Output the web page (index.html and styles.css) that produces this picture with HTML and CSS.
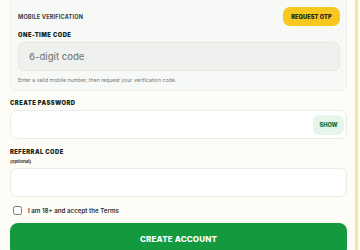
FILE: index.html
```html
<!DOCTYPE html>
<html lang="en">
<head>
    <meta charset="UTF-8">
    <meta name="viewport" content="width=device-width, initial-scale=1.0">
    <title>Create Account</title>
    <link rel="stylesheet" href="styles.css">
</head>
<body>
    <div class="panel">
        <div class="verify-box">
            <div class="verify-head">
                <span class="verify-title">Mobile verification</span>
                <button class="otp-btn">Request OTP</button>
            </div>
            <label class="field-label" for="otp">One-time code</label>
            <input type="text" id="otp" class="otp-input" placeholder="6-digit code">
            <p class="hint">Enter a valid mobile number, then request your verification code.</p>
        </div>

        <div class="field">
            <label class="field-label" for="password">Create password</label>
            <div class="input-wrap">
                <input type="password" id="password" class="text-input">
                <button class="show-btn">Show</button>
            </div>
        </div>

        <div class="field">
            <label class="field-label" for="referral">Referral code</label>
            <span class="optional">(optional)</span>
            <div class="input-wrap">
                <input type="text" id="referral" class="text-input">
            </div>
        </div>

        <label class="terms"><input type="checkbox"> <span>I am 18+ and accept the Terms</span></label>

        <button class="create-btn">Create account</button>
    </div>
</body>
</html>
```

FILE: styles.css
```css
body {
    margin: 0;
    background: #fdfdf9;
    font-family: Inter, "Liberation Sans", sans-serif;
    color: #2b2b2b;
    overflow: hidden;
}

.panel {
    width: 337px;
    padding: 0 8px 0 10px;
    border-right: 3px solid #f8e4a6;
    background: #fdfcf7;
    min-height: 260px;
}

.verify-box {
    margin-top: -10px;
    padding: 16px 6px 7px 7px;
    background: #f7f9f6;
    border: 1px solid #eceee9;
    border-radius: 7px;
}

.verify-head {
    display: flex;
    justify-content: space-between;
    align-items: center;
    height: 19px;
}

.verify-title {
    font-size: 5.6px;
    font-weight: 700;
    text-transform: uppercase;
    letter-spacing: 0.03em;
    color: #3d3d3d;
}

.otp-btn {
    background: #f7c820;
    border: none;
    border-radius: 7px;
    height: 19px;
    width: 57px;
    padding: 0;
    font-family: inherit;
    font-size: 5.6px;
    font-weight: 900;
    text-transform: uppercase;
    color: #2a2a1a;
    letter-spacing: 0.02em;
}

.field-label {
    display: block;
    font-size: 5.8px;
    font-weight: 900;
    text-transform: uppercase;
    letter-spacing: 0.08em;
    color: #10261a;
}

.verify-box .field-label {
    margin-top: 5px;
}

.otp-input {
    display: block;
    width: 100%;
    box-sizing: border-box;
    height: 29px;
    margin-top: 4px;
    padding: 0 10px;
    background: #eef1ed;
    border: 1px solid #e4e7e2;
    border-radius: 6px;
    font-family: inherit;
    font-size: 9.5px;
    font-weight: 500;
}

.otp-input::placeholder {
    color: #7c7f7c;
}

.hint {
    margin: 6px 0 0;
    font-size: 5.2px;
    color: #777;
}

.field {
    margin-top: 8px;
}

.field + .field {
    margin-top: 9px;
}

.optional {
    display: block;
    margin-top: 4px;
    font-size: 4.5px;
    font-weight: 700;
    color: #333;
}

.input-wrap {
    position: relative;
    margin-top: 4px;
}

.text-input {
    display: block;
    width: 100%;
    box-sizing: border-box;
    height: 29px;
    background: #fff;
    border: 1px solid #eaece7;
    border-radius: 7px;
}

.show-btn {
    position: absolute;
    right: 3px;
    top: 5px;
    width: 31px;
    height: 20px;
    border: none;
    border-radius: 6px;
    background: #e6f5e9;
    color: #1f7a3d;
    font-family: inherit;
    font-size: 5.6px;
    font-weight: 900;
    text-transform: uppercase;
    padding: 0;
}

.terms {
    display: flex;
    align-items: center;
    gap: 6px;
    margin-top: 9px;
    padding-left: 3px;
    font-size: 6.2px;
    font-weight: 600;
    color: #333;
}

.terms input {
    margin: 0;
    width: 9px;
    height: 9px;
}

.create-btn {
    display: block;
    width: 100%;
    height: 34px;
    margin-top: 8px;
    border: none;
    border-radius: 8px;
    background: #13993e;
    color: #fff;
    font-family: inherit;
    font-size: 8px;
    font-weight: 800;
    text-transform: uppercase;
    letter-spacing: 0.02em;
    padding-bottom: 3px;
}
```
